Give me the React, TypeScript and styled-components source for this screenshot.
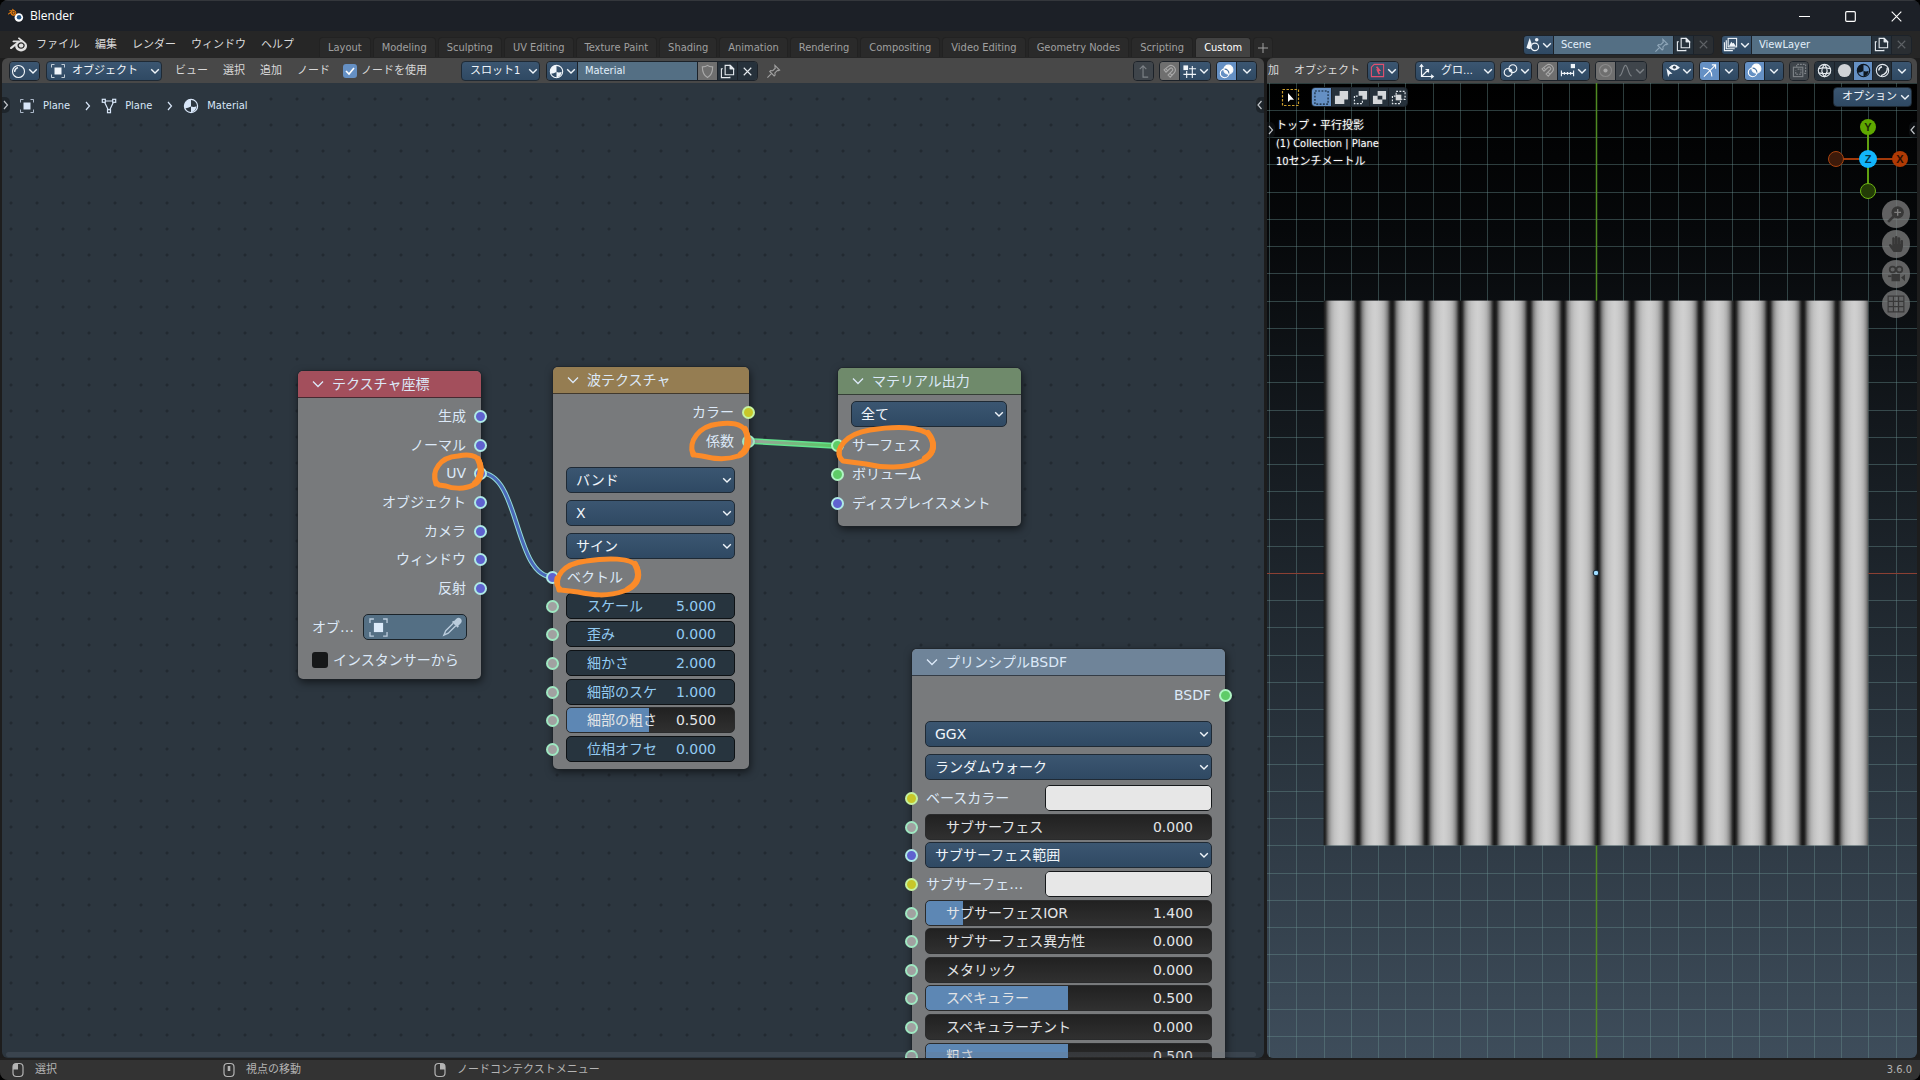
import React, { useId } from "react";
import styled, { createGlobalStyle, css } from "styled-components";
import { SiBlender } from "react-icons/si";
import { FaHandPaper } from "react-icons/fa";

const uiFont = `"DejaVu Sans Condensed", "DejaVu Sans", "Noto Sans CJK JP", sans-serif`;
const nodeFont = `"DejaVu Sans", "Noto Sans CJK JP", sans-serif`;

const GlobalStyle = createGlobalStyle`
  * { box-sizing: border-box; }
  body { margin: 0; background: #000; overflow: hidden; }
  button, input, select { font: inherit; color: inherit; margin: 0; padding: 0; border: 0; background: none; border-radius: 0; outline: none; }
  svg { display: block; flex: none; }
`;

/* ---------- icons ---------- */

const Svg = ({ s = 16, children, sw = 1.2 }: { s?: number; sw?: number; children: React.ReactNode }) => (
  <svg width={s} height={s} viewBox="0 0 16 16" fill="none" stroke="currentColor" strokeWidth={sw} aria-hidden="true">
    {children}
  </svg>
);

const Chevron = ({ s = 10 }: { s?: number }) => (
  <svg width={s} height={s} viewBox="0 0 10 10" fill="none" stroke="currentColor" strokeWidth="1.4" aria-hidden="true">
    <path d="M1.2 3.2 5 7 8.8 3.2" />
  </svg>
);
const Angle = ({ left }: { left?: boolean }) => (
  <svg width="6" height="10" viewBox="0 0 6 10" fill="none" stroke="currentColor" strokeWidth="1.2" aria-hidden="true">
    <path d={left ? "M4.5 1 1 5l3.5 4" : "M1 1l3.5 4L1 9"} />
  </svg>
);

const icons: Record<string, React.ReactNode> = {
  shader: (<><circle cx="8" cy="8" r="6.4" /><path d="M4 8.5A4 4 0 0 1 7.5 4" strokeWidth="1.6" /></>),
  object: (<><rect x="4.5" y="4.5" width="7" height="7" fill="currentColor" stroke="none" /><path d="M1.5 4.5v-3h3M11.5 1.5h3v3M14.5 11.5v3h-3M4.5 14.5h-3v-3" strokeWidth="1" opacity=".75" /></>),
  mesh: (<><path d="M4 3h8M3.6 4.2 7.3 12M12.4 4.2 8.7 12" /><rect x="1.3" y="1.3" width="3" height="3" /><rect x="11.7" y="1.3" width="3" height="3" /><rect x="6.5" y="11.7" width="3" height="3" /></>),
  material: (<><circle cx="8" cy="8" r="6.6" /><path d="M8 1.4A6.6 6.6 0 0 0 2 10.5Q5 10 8 8.500zM8 8.500q3 1 5.500-.2Q13 13 8 14.600z" fill="currentColor" stroke="none" /></>),
  shield: <path d="M8 1.5C6.5 2.8 4.5 3 2.5 3c0 5 .8 9 5.5 11.5C12.7 12 13.500 8 13.500 3c-2 0-4-.2-5.500-1.500z" />,
  copy: (<><path d="M5.5 1.5h5.5l3.5 3.5v6.5h-9zM11 1.5V5h3.5" /><path d="M11 2v3h3.300z" fill="currentColor" /><path d="M3 5H1.5v9.5h9V13.5" /></>),
  close: <path d="m4 4 8 8M12 4l-8 8" />,
  pin: <path d="m9.5 1.5 5 5-1.2.6-1.1-.3-2.7 2.7.2 2.3-1 .9-4.7-4.700.9-1 2.300.2 2.700-2.700-.3-1.100zM6 10l-4.500 4.500" />,
  parent: <path d="M13 14H7.5V2M4 5.5 7.5 2 11 5.5" />,
  magnet: <path d="M2.2 6.3 6.8 2.5a4.7 4.7 0 0 1 6.4 6.7L8.8 14 6.500 11.800l4.400-4.500a1.700 1.700 0 0 0-2.400-2.500L4.300 8.700zM4 4.800l2 2.400M8.400 9.800l2.300 2.200" />,
  snapGrid: (<><path d="M5 7.5V15M11 2v13M7.5 5H15M1.5 11H15" /><rect x="1.5" y="1.5" width="5" height="5" fill="currentColor" stroke="none" /></>),
  snapInc: (<><path d="M1.5 8v6M14.5 8v6M1.5 11h13M4.7 9.5v3M8 9.5v3M11.3 9.5v3" /><rect x="11.5" y="1" width="4.5" height="4.5" fill="currentColor" stroke="none" /></>),
  overlays: (<><circle cx="10" cy="6" r="4.8" fill="currentColor" /><circle cx="6" cy="10" r="4.6" /><path d="M6 5.4a4.6 4.6 0 0 1 4.6 4.6" stroke="#4b74a3" /></>),
  scene: (<><path d="M5 1 1.5 11.5q3 2 4.5 1L7 7z" fill="currentColor" stroke="none" /><circle cx="10.5" cy="10.5" r="4" /><circle cx="12.5" cy="3" r="1.9" fill="currentColor" stroke="none" /></>),
  layers: (<><rect x="5.5" y="1.5" width="9" height="9" /><path d="m6.5 9.5 2.3-4.5 1.5 2 1-1 2.2 3.500z" fill="currentColor" stroke="none" /><path d="M3.5 3.5v9h9M1.5 5.5v9h9" /></>),
  filter: (<g stroke="#e0506e"><path d="M4.5 1.5h10v13h-13v-10z" /><path d="M7 4l3 3.500H8l2 4.500" strokeWidth="1.8" /></g>),
  axes: (<path d="M2.5 2v11.5H14M2.5 13.5 9 7M.7 4 2.5 1.7 4.3 4M12 11.7l2.3 1.8-2.3 1.8M6.5 6.5H9.5V9.5" />),
  pivot: (<><circle cx="5.5" cy="10" r="4.2" /><circle cx="10.5" cy="6" r="4.2" /><circle cx="8" cy="8" r="1.5" fill="currentColor" stroke="none" /></>),
  proportional: (<><circle cx="8" cy="8" r="6.4" opacity=".45" /><circle cx="8" cy="8" r="2.2" fill="currentColor" stroke="none" /></>),
  falloff: <path d="M1.5 14C5 13 5.500 2.500 8 2.500S11 13 14.500 14" />,
  visibility: (<><path d="M5 5Q9.5-.5 15 5q-5 4.500-10 0z" fill="currentColor" /><circle cx="10" cy="4.5" r="1.7" fill="#345" stroke="none" /><path d="m1.5 5.5 6.500 6-3 .3L3.300 15z" fill="currentColor" stroke="none" /></>),
  gizmo: (<><path d="M2 5.500Q10.500 5.500 10.500 14.500M2 14.500 14 2.500M10.500 2H14.500V6" strokeWidth="1.1" /><circle cx="2" cy="5.500" r="1" fill="currentColor" stroke="none" /></>),
  xray: (<><rect x="1.5" y="4.5" width="10" height="10" /><path d="M5 4V1.5h9.5V11H12M6 6.500h3.500V12H4V8" strokeDasharray="2 1" /></>),
  wire: (<><circle cx="8" cy="8" r="6.6" /><path d="M1.6 6Q8 4.5 14.4 6M1.6 10.500q6.400 1.500 12.800 0M8 1.400Q2.500 8 8 14.600 13.500 8 8 1.400" /></>),
  solid: <circle cx="8" cy="8" r="7" fill="#cfd2d6" stroke="none" />,
  rendered: (<><circle cx="8" cy="8" r="6.6" /><path d="M4 8A4.5 4.5 0 0 1 7.5 4M13 5q1 6-6.500 8.500" strokeWidth="1.5" /></>),
  mouseL: (<><rect x="3" y="1.5" width="10" height="13" rx="3.5" /><path d="M3 7.5V4.5a3 3 0 0 1 3-3h2v6z" fill="currentColor" stroke="none" /></>),
  mouseM: (<><rect x="3" y="1.5" width="10" height="13" rx="3.5" /><rect x="6.7" y="4" width="2.6" height="5" fill="currentColor" stroke="none" /></>),
  mouseR: (<><rect x="3" y="1.5" width="10" height="13" rx="3.5" /><path d="M13 7.5V4.5a3 3 0 0 0-3-3H8v6z" fill="currentColor" stroke="none" /></>),
  dropper: (<g opacity=".75"><path d="M10 4 12.500 6.500l2-2a1.700 1.700 0 0 0-2.500-2.500zM8.500 3.500l4.500 4.500" fill="currentColor" strokeWidth="1.5" /><path d="m9 5-6 6-1.500 3.500L5 13l6-6" strokeWidth="1.100" /></g>),
};
const Icon = ({ n, s }: { n: string; s?: number }) => <Svg s={s}>{icons[n]}</Svg>;

const BlenderLogo = () => (
  <svg width="17" height="17" viewBox="0 0 24 24" aria-hidden="true">
    <circle cx="15.3" cy="13.5" r="6" fill="#fff" />
    <SiBlender x="0" y="0" width="24" height="24" color="#e87d0d" />
    <circle cx="15.6" cy="13.2" r="3.2" fill="#265787" />
  </svg>
);

/* ---------- window frame ---------- */

const Window = styled.div`
  height: 100vh;
  display: grid;
  grid-template-rows: 31px 27px minmax(0, 1fr) 22px;
  background: #1d1d1d;
  border-radius: 8px;
  overflow: hidden;
  font: 11px/16px ${uiFont};
  color: #d6d6d6;
  cursor: default;
  white-space: nowrap;
`;
const TitleBar = styled.header`
  display: flex;
  align-items: center;
  gap: 5px;
  padding: 0 1px 0 8px;
  background: #1c2027;
  border-top: 1px solid #34373c;
  color: #fff;
  font: 12px/16px "Open Sans", "Noto Sans", sans-serif;
`;
const WindowButtons = styled.div`
  display: flex;
  margin-left: auto;
  height: 100%;
`;
const WindowButton = styled.button`
  width: 46px;
  display: grid;
  place-items: center;
`;
const MenuBar = styled.div`
  display: flex;
  align-items: center;
  padding: 0 8px 0 10px;
  background: #262626;
`;
const Menus = styled.nav`
  display: flex;
  gap: 15px;
`;
const MenuButton = styled.button`
  height: 19px;
  color: #dadada;
`;
const AppButton = styled.button`
  margin-right: 9px;
  color: #e0e0e0;
`;
const Tabs = styled.div`
  display: flex;
  align-self: flex-end;
  gap: 2px;
  margin: 0 0 1px 25px;
`;
const Tab = styled.button<{ $active?: boolean }>`
  height: 20px;
  padding: 0 8px;
  border-radius: 4px 4px 0 0;
  border: 1px solid #222;
  border-bottom: 0;
  background: ${(p) => (p.$active ? "#424242" : "#2a2a2a")};
  color: ${(p) => (p.$active ? "#fff" : "#a0a0a0")};
`;
const AddTab = styled(Tab)`
  padding: 0 4px;
`;
const Blocks = styled.div`
  display: flex;
  gap: 7px;
  margin-left: auto;
`;
const Areas = styled.main`
  display: flex;
  gap: 3px;
  padding: 0 3px 0 2px;
  min-height: 0;
`;
const Area = styled.section<{ $grow: number }>`
  flex: ${(p) => p.$grow} 1 0;
  min-width: 0;
  display: flex;
  flex-direction: column;
  border-radius: 6px;
  overflow: hidden;
`;
const AreaHeader = styled.div<{ $pad: string }>`
  height: 25px;
  flex: none;
  display: flex;
  align-items: center;
  padding: ${(p) => p.$pad};
  background: #484848;
`;
const HeaderGroup = styled.div<{ $gap?: number; $ml?: string }>`
  display: flex;
  align-items: center;
  gap: ${(p) => p.$gap ?? 6}px;
  margin-left: ${(p) => p.$ml ?? "0"};
`;
const StatusBar = styled.footer`
  display: flex;
  align-items: center;
  padding: 0 8px 0 10px;
  background: #333;
  border-top: 2px solid #1f1f1f;
  color: #b4b4b4;
`;
const Hint = styled.span`
  width: 211px;
  display: flex;
  gap: 9px;
`;
const Version = styled.span`
  margin-left: auto;
`;

/* ---------- header widgets ---------- */

const blue = "linear-gradient(#3b5671, #2f4963)";

const Joined = styled.div`
  display: flex;
  height: 20px;
  border: 1px solid #1c2229;
  border-radius: 4px;
  overflow: hidden;
  & > * + * { border-left: 1px solid #1c2229; }
`;
type Tone = "menu" | "on" | "grey" | "dark" | "off" | "dim";
const tones: Record<Tone, ReturnType<typeof css>> = {
  menu: css`background: ${blue}; color: #f0f5fa;`,
  on: css`background: #6590c4; color: #fff;`,
  grey: css`background: #6f6f6f; color: #a8a8a8;`,
  dark: css`background: #26313b; color: #e4e9ee;`,
  off: css`background: #2a2e32; color: #5d6165;`,
  dim: css`background: #3f454b; color: #7d8287;`,
};
const Cell = styled.button<{ $tone: Tone; $w: number }>`
  width: ${(p) => p.$w}px;
  display: flex;
  align-items: center;
  justify-content: center;
  gap: 2px;
  ${(p) => tones[p.$tone]}
`;
const NameInput = styled.input<{ $w: number }>`
  width: ${(p) => p.$w}px;
  padding: 0 7px;
  background: #546f84;
  color: #e3effb;
`;
const Pinned = styled.div`
  position: relative;
  display: flex;
  & > svg { position: absolute; right: 4px; top: 2px; color: #8fa6b8; }
`;
const SelectWrap = styled.div<{ $w?: number; $node?: boolean }>`
  position: relative;
  width: ${(p) => (p.$w ? p.$w + "px" : "100%")};
  color: #f0f5fa;
  & > svg { position: absolute; top: 50%; transform: translateY(-50%); pointer-events: none; }
  & > svg:first-of-type:not(:last-child) { left: 4px; }
  & > svg:last-child { right: ${(p) => (p.$node ? 3 : 2)}px; }
`;
const Select = styled.select<{ $pl: number; $h: number }>`
  appearance: none;
  display: block;
  width: 100%;
  height: ${(p) => p.$h}px;
  padding: 0 14px 0 ${(p) => p.$pl}px;
  border: 1px solid #1f2a35;
  border-radius: ${(p) => (p.$h > 20 ? 5 : 4)}px;
  background: ${blue};
`;
const CheckLabel = styled.label<{ $node?: boolean }>`
  display: flex;
  align-items: center;
  gap: ${(p) => (p.$node ? 5 : 4)}px;
`;
const Check = styled.input<{ $s: number }>`
  appearance: none;
  width: ${(p) => p.$s}px;
  height: ${(p) => p.$s}px;
  border-radius: 3px;
  background: #161819;
  &:checked {
    background: #6590c4 url("data:image/svg+xml,%3Csvg xmlns='http://www.w3.org/2000/svg' viewBox='0 0 14 14'%3E%3Cpath d='M3 7l3 3 5-6' fill='none' stroke='white' stroke-width='1.6'/%3E%3C/svg%3E");
  }
`;
const PlainIcon = styled.button`
  color: #a0a0a0;
`;

const IconSelect = ({ icon, label, w }: { icon?: string; label: string; w: number }) => (
  <SelectWrap $w={w}>
    <Select $pl={icon ? 25 : 8} $h={20} aria-label={label}><option>{label}</option></Select>
    {icon && <Icon n={icon} />}
    <Chevron />
  </SelectWrap>
);
const MenuCell = ({ icon, w = 31, tone = "menu" as Tone, label }: { icon?: string; w?: number; tone?: Tone; label: string }) => (
  <Cell $tone={tone} $w={w} aria-label={label}>
    {icon && <Icon n={icon} s={15} />}
    <Chevron />
  </Cell>
);
const IconCell = ({ icon, tone, label, w = 19 }: { icon: string; tone: Tone; label: string; w?: number }) => (
  <Cell $tone={tone} $w={w} aria-label={label}><Icon n={icon} s={15} /></Cell>
);

/* ---------- node editor ---------- */

const Canvas = styled.div`
  position: relative;
  flex: 1;
  min-height: 0;
  overflow: hidden;
  background: radial-gradient(circle, #222a31 1px, transparent 2px) -4px 3px / 26px 26px #2c363f;
  font: 14px/20px ${nodeFont};
`;
const Breadcrumbs = styled.nav`
  display: flex;
  align-items: center;
  width: 264px;
  height: 34px;
  margin-top: 6px;
  padding-left: 17px;
  gap: 8px;
  background: #2c363f;
  color: #d8e6f8;
  font: 11px/16px ${uiFont};
  & > svg { margin: 0 2px 0 7px; }
`;
const Crumb = styled.a`
  display: flex;
  gap: 8px;
  color: inherit;
  text-decoration: none;
`;
const EdgeToggle = styled.button<{ $side: "left" | "right"; $top: number }>`
  position: absolute;
  ${(p) => p.$side}: 0;
  top: ${(p) => p.$top}px;
  width: 8px;
  height: 16px;
  display: grid;
  place-items: center;
  border-radius: ${(p) => (p.$side === "left" ? "0 5px 5px 0" : "5px 0 0 5px")};
  background: rgba(20, 24, 28, 0.55);
  color: #c0c4c8;
`;
const Layer = styled.svg`
  position: absolute;
  inset: 0;
  width: 100%;
  height: 100%;
  pointer-events: none;
`;
const ScrollTrack = styled.div`
  position: absolute;
  left: 4px;
  right: 8px;
  bottom: 1px;
  height: 5px;
  border-radius: 3px;
  background: rgba(110, 120, 130, 0.22);
`;
const NodeBox = styled.article<{ $x: number; $y: number; $w: number }>`
  position: absolute;
  left: ${(p) => p.$x}px;
  top: ${(p) => p.$y}px;
  width: ${(p) => p.$w}px;
  border-radius: 5px;
  background: #787a7c;
  box-shadow: 0 0 0 1px rgba(30, 35, 40, 0.55), 1px 3px 9px rgba(0, 0, 0, 0.6);
  color: #dce9f8;
`;
const NodeHeader = styled.h2<{ $color: string }>`
  display: flex;
  align-items: center;
  gap: 8px;
  height: 27px;
  margin: 0;
  padding: 0 0 0 14px;
  border-radius: 5px 5px 0 0;
  border-bottom: 1px solid rgba(20, 22, 26, 0.65);
  background: ${(p) => p.$color};
  font: inherit;
`;
const NodeBody = styled.div<{ $pad: string }>`
  padding: ${(p) => p.$pad};
`;
/* sockets sit on a shared pitch, so a group's height depends only on its row count */
const SocketGroup = styled.div<{ $rows: number }>`
  display: grid;
  grid-auto-rows: 1fr;
  height: ${(p) => Math.round(p.$rows * 28.6)}px;
`;
const SocketRow = styled.div<{ $out?: boolean }>`
  position: relative;
  display: flex;
  align-items: center;
  justify-content: ${(p) => (p.$out ? "flex-end" : "space-between")};
  padding: ${(p) => (p.$out ? "0 1px 0 0" : "0 0 0 1px")};
`;
const FieldRow = styled(SocketRow)`
  padding: 0;
`;
const kinds = {
  vector: ["#5f62cf", "#aee9e6"],
  color: ["#c7c729", "#c5f2a0"],
  float: ["#a1a1a1", "#9fe8c2"],
  shader: ["#5fcc67", "#b0f5c4"],
} as const;
type Kind = keyof typeof kinds;
const Socket = styled.i<{ $kind: Kind; $out?: boolean }>`
  position: absolute;
  top: 50%;
  ${(p) => (p.$out ? "right" : "left")}: -20px;
  width: 13px;
  height: 13px;
  margin-top: -6px;
  border-radius: 50%;
  border: 2px solid ${(p) => kinds[p.$kind][1]};
  background: ${(p) => kinds[p.$kind][0]};
`;
const SelectStack = styled.div`
  display: grid;
  gap: 7px;
  margin: 12px 0 4px;
`;
const Num = styled.label<{ $fill?: number; $linked?: boolean }>`
  display: flex;
  align-items: center;
  justify-content: space-between;
  width: 100%;
  height: 26px;
  padding: 0 18px 0 20px;
  border-radius: 5px;
  border: 1px solid ${(p) => (p.$linked ? "#0e1215" : "#2a2b2c")};
  color: ${(p) => (p.$linked ? "#93cbf2" : "#e2e4e6")};
  background: ${(p) =>
    p.$linked
      ? "#27343e"
      : `linear-gradient(to right, #5d87b4 ${p.$fill ?? 0}%, transparent ${p.$fill ?? 0}%), linear-gradient(#212121, #303030)`};
`;
const NumName = styled.span<{ $clip?: boolean }>`
  overflow: hidden;
  ${(p) => p.$clip && css`width: 70px;`}
`;
const NumInput = styled.input`
  width: 48px;
  text-align: right;
`;
const Swatch = styled.input`
  appearance: none;
  width: 167px;
  height: 26px;
  border: 1px solid #15181a;
  border-radius: 5px;
  overflow: hidden;
  &::-webkit-color-swatch-wrapper { padding: 0; }
  &::-webkit-color-swatch { border: 0; }
`;
const ObjectRow = styled.div`
  display: flex;
  align-items: center;
  justify-content: space-between;
  margin: 12px 0 10px;
`;
const ObjectPicker = styled.button`
  display: flex;
  align-items: center;
  justify-content: space-between;
  width: 104px;
  height: 26px;
  padding: 0 4px;
  border: 1px solid #1b2329;
  border-radius: 5px;
  background: #546f84;
  color: #dcebfa;
`;

const NodeSelect = ({ label }: { label: string }) => (
  <SelectWrap $node>
    <Select $pl={9} $h={26} aria-label={label}><option>{label}</option></Select>
    <Chevron />
  </SelectWrap>
);
const Out = ({ name, kind }: { name: string; kind: Kind }) => (
  <SocketRow $out>{name}<Socket $kind={kind} $out /></SocketRow>
);
const In = ({ name, kind }: { name: string; kind: Kind }) => (
  <SocketRow><Socket $kind={kind} />{name}</SocketRow>
);
const NumRow = ({ name, value, fill, linked }: { name: string; value: string; fill?: number; linked?: boolean }) => {
  const id = useId();
  return (
    <FieldRow>
      <Socket $kind="float" />
      <Num htmlFor={id} $fill={fill} $linked={linked}>
        <NumName $clip={linked || name === "細部の粗さ"}>{name}</NumName>
        <NumInput id={id} defaultValue={value} />
      </Num>
    </FieldRow>
  );
};
const ColorRow = ({ name }: { name: string }) => {
  const id = useId();
  return (
    <SocketRow>
      <Socket $kind="color" />
      <label htmlFor={id}>{name}</label>
      <Swatch id={id} type="color" defaultValue="#e7e7e7" />
    </SocketRow>
  );
};
const Node = (p: { x: number; y: number; w: number; color: string; title: string; pad: string; children: React.ReactNode }) => (
  <NodeBox $x={p.x} $y={p.y} $w={p.w}>
    <NodeHeader $color={p.color}>
      <svg width="12" height="12" viewBox="0 0 12 12" fill="none" stroke="currentColor" strokeWidth="1.3" aria-hidden="true"><path d="m1 3.5 5 5 5-5" /></svg>
      {p.title}
    </NodeHeader>
    <NodeBody $pad={p.pad}>{p.children}</NodeBody>
  </NodeBox>
);

const NodeEditor = () => (
  <Canvas>
    <Breadcrumbs aria-label="context path">
      <Crumb href="#object"><Icon n="object" />Plane</Crumb>
      <Angle />
      <Crumb href="#mesh"><Icon n="mesh" />Plane</Crumb>
      <Angle />
      <Crumb href="#material"><Icon n="material" />Material</Crumb>
    </Breadcrumbs>
    <EdgeToggle $side="left" $top={14} aria-label="toolbar"><Angle /></EdgeToggle>
    <EdgeToggle $side="right" $top={14} aria-label="sidebar"><Angle left /></EdgeToggle>

    <Layer fill="none">
      <defs>
        <linearGradient id="linkFade" gradientUnits="userSpaceOnUse" x1="747" y1="0" x2="836" y2="0">
          <stop offset="0" stopColor="#a1a1a1" />
          <stop offset="1" stopColor="#55c860" />
        </linearGradient>
      </defs>
      <path d="M479 390C518 390 512 494 551 494" stroke="#93dcd8" strokeWidth="5" />
      <path d="M479 390C518 390 512 494 551 494" stroke="#4a68b8" strokeWidth="3" />
      <path d="M747 358 836 363" stroke="#62e48d" strokeWidth="6" />
      <path d="M747 358 836 363" stroke="url(#linkFade)" strokeWidth="3" />
    </Layer>

    <Node x={296} y={288} w={183} color="#a34f5c" title="テクスチャ座標" pad="4px 14px 9px">
      <SocketGroup $rows={7}>
        {["生成", "ノーマル", "UV", "オブジェクト", "カメラ", "ウィンドウ", "反射"].map((n) => (
          <Out key={n} name={n} kind="vector" />
        ))}
      </SocketGroup>
      <ObjectRow>
        <span>オブ…</span>
        <ObjectPicker aria-label="object"><Icon n="object" s={21} /><Icon n="dropper" s={20} /></ObjectPicker>
      </ObjectRow>
      <CheckLabel $node><Check $s={16} type="checkbox" />インスタンサーから</CheckLabel>
    </Node>

    <Node x={551} y={284} w={196} color="#957d52" title="波テクスチャ" pad="4px 14px 6px 13px">
      <SocketGroup $rows={2}>
        <Out name="カラー" kind="color" />
        <Out name="係数" kind="float" />
      </SocketGroup>
      <SelectStack>
        <NodeSelect label="バンド" />
        <NodeSelect label="X" />
        <NodeSelect label="サイン" />
      </SelectStack>
      <SocketGroup $rows={7}>
        <In name="ベクトル" kind="vector" />
        <NumRow linked name="スケール" value="5.000" />
        <NumRow linked name="歪み" value="0.000" />
        <NumRow linked name="細かさ" value="2.000" />
        <NumRow linked name="細部のスケ" value="1.000" />
        <NumRow name="細部の粗さ" value="0.500" fill={49} />
        <NumRow linked name="位相オフセ" value="0.000" />
      </SocketGroup>
    </Node>

    <Node x={836} y={285} w={183} color="#6f8a6b" title="マテリアル出力" pad="6px 14px 9px 13px">
      <NodeSelect label="全て" />
      <NodeBody $pad="4px 0 0">
        <SocketGroup $rows={3}>
          <In name="サーフェス" kind="shader" />
          <In name="ボリューム" kind="shader" />
          <In name="ディスプレイスメント" kind="vector" />
        </SocketGroup>
      </NodeBody>
    </Node>

    <Node x={910} y={566} w={313} color="#6f8499" title="プリンシプルBSDF" pad="4px 13px 12px">
      <SocketGroup $rows={1}><Out name="BSDF" kind="shader" /></SocketGroup>
      <SelectStack>
        <NodeSelect label="GGX" />
        <NodeSelect label="ランダムウォーク" />
      </SelectStack>
      <SocketGroup $rows={10}>
        <ColorRow name="ベースカラー" />
        <NumRow name="サブサーフェス" value="0.000" />
        <FieldRow><Socket $kind="vector" /><NodeSelect label="サブサーフェス範囲" /></FieldRow>
        <ColorRow name="サブサーフェ…" />
        <NumRow name="サブサーフェスIOR" value="1.400" fill={13} />
        <NumRow name="サブサーフェス異方性" value="0.000" />
        <NumRow name="メタリック" value="0.000" />
        <NumRow name="スペキュラー" value="0.500" fill={50} />
        <NumRow name="スペキュラーチント" value="0.000" />
        <NumRow name="粗さ" value="0.500" fill={50} />
      </SocketGroup>
    </Node>

    {/* hand-drawn annotation strokes */}
    <Layer fill="none" stroke="#fb8b29" strokeWidth="5" strokeLinecap="round" strokeLinejoin="round">
      <path d="M434 401C429 388 438 374 456 373C466 371 476 372 478 380C481 389 479 399 471 402C462 407 449 405 444 403L437 402Q432 399 433 391" />
      <path d="M691 372C686 358 697 343 716 341C730 339 742 341 745 351C749 363 744 371 736 373C722 378 708 375 700 373L693 372Q689 368 690 362" />
      <path d="M839 376C833 366 843 351 868 347C893 343 920 343 928 353C935 364 931 373 920 378C903 386 880 385 864 381L841 378Q836 374 837 367" />
      <path d="M557 507C552 494 560 481 584 478C604 475 630 474 635 484C640 496 634 504 622 508C605 514 590 512 576 509L559 507Q553 502 555 495" />
      <path d="M476 376C481 386 478 396 473 400M743 346C748 356 745 367 739 371M926 350C934 360 932 370 923 375M633 481C639 492 635 501 626 506" strokeWidth="6" />
    </Layer>
    <ScrollTrack />
  </Canvas>
);

/* ---------- 3D viewport ---------- */

const Viewport = styled.div`
  position: relative;
  flex: 1;
  min-height: 0;
  overflow: hidden;
  background: linear-gradient(#000, #06080a 15%, #3e4d5b);
`;
const ToolRow = styled.div`
  position: relative;
  display: flex;
  align-items: center;
  gap: 11px;
  padding: 4px 5px 0 14px;
  & > :last-child { margin-left: auto; }
`;
const ToolButton = styled.button`
  color: #fff;
`;
const Info = styled.div`
  position: relative;
  margin: 10px 0 0 9px;
  color: #fff;
  line-height: 18px;
  text-shadow: 0 0 2px rgba(255, 255, 255, 0.4);
`;
const GizmoSvg = styled.svg`
  position: absolute;
  right: 8px;
  top: 34px;
  font: 700 11px/1 "Liberation Sans", sans-serif;
`;
const NavColumn = styled.div`
  position: absolute;
  right: 7px;
  top: 117px;
  display: grid;
  gap: 2px;
`;
const NavButton = styled.button`
  width: 28px;
  height: 28px;
  display: grid;
  place-items: center;
  border-radius: 50%;
  background: rgba(128, 128, 128, 0.75);
  color: #383838;
`;

const STEP = 27.24;
const CX = 329;
const CY = 490;
const HALF = STEP * 10;
const WAVE = 34.24;
const waveStops: [number, string][] = [
  [0, "#161616"], [0.05, "#282828"], [0.09, "#4e4e4e"], [0.13, "#777777"], [0.18, "#979797"], [0.24, "#b1b1b1"],
  [0.32, "#c2c2c2"], [0.42, "#cccccc"], [0.5, "#d0d0d0"],
];
const stops = [...waveStops, ...waveStops.slice(0, -1).reverse().map(([o, c]) => [1 - o, c] as [number, string])];
const steps = Array.from({ length: 41 }, (_, i) => i - 20).filter((i) => i !== 0);

const Scene3D = () => (
  <Layer viewBox="0 0 650 975" preserveAspectRatio="xMidYMid slice">
    <defs>
      <linearGradient id="wave" gradientUnits="userSpaceOnUse" spreadMethod="repeat" x1={CX - HALF} x2={CX - HALF + WAVE} y1="0" y2="0">
        {stops.map(([o, c], i) => <stop key={i} offset={o} stopColor={c} />)}
      </linearGradient>
    </defs>
    <g stroke="#6a9090" strokeOpacity=".42">
      {steps.map((i) => (
        <React.Fragment key={i}>
          <path d={`M${Math.round(CX + i * STEP) + 0.5} 0V975`} />
          <path d={`M0 ${Math.round(CY + i * STEP) + 0.5}H650`} />
        </React.Fragment>
      ))}
    </g>
    <path d={`M0 ${CY + 0.5}H650`} stroke="#8c4033" />
    <path d={`M${CX + 0.5} 0V975`} stroke="#4f8a22" strokeWidth="1.5" />
    <rect x={CX - HALF} y={CY - HALF} width={HALF * 2} height={HALF * 2} fill="url(#wave)" />
    <circle cx={CX} cy={CY} r="2.8" fill="#9fdcff" stroke="#12222e" />
  </Layer>
);

const Gizmo = () => (
  <GizmoSvg width="82" height="84" viewBox="0 0 82 84" textAnchor="middle">
    <path d="M9 42H73" stroke="#a33a0a" strokeWidth="2" />
    <path d="M41 10V74" stroke="#5fa010" strokeWidth="2" />
    <circle cx="9" cy="42" r="7.5" fill="#3d1a0a" stroke="#a84410" />
    <circle cx="41" cy="74" r="7.5" fill="#233c06" stroke="#6db512" />
    <circle cx="41" cy="10" r="8" fill="#5fa800" />
    <circle cx="73" cy="42" r="8" fill="#b03a04" />
    <circle cx="41" cy="42" r="9" fill="#12b5fb" />
    <text x="41" y="14" fill="#1a2c04">Y</text>
    <text x="73" y="46" fill="#2c0e02">X</text>
    <text x="41" y="46" fill="#04344a">Z</text>
  </GizmoSvg>
);

const SelectMode = ({ d, on }: { d: React.ReactNode; on?: boolean }) => (
  <Cell $tone={on ? "on" : "dark"} $w={19} aria-label="select mode">
    <Svg s={15}>{d}</Svg>
  </Cell>
);
const dash = { strokeDasharray: "2 1.5" };

const ViewportArea = () => (
  <Viewport>
    <Scene3D />
    <ToolRow>
      <ToolButton aria-label="select box">
        <svg width="19" height="19" viewBox="0 0 19 19" fill="none" aria-hidden="true">
          <rect x="1.5" y="1.5" width="16" height="16" stroke="#c79a2a" strokeWidth="1.2" strokeDasharray="2.5 1.5" />
          <path d="M7 5v9l2.300-2.200H13z" fill="#fff" />
        </svg>
      </ToolButton>
      <Joined>
        <SelectMode on d={<rect x="1" y="1" width="14" height="14" stroke="#102030" {...dash} />} />
        <SelectMode d={<path d="M6 1h9v9h-4v5H1V6h5z" fill="#d4d7da" stroke="none" />} />
        <SelectMode d={<><path d="M6 1h9v9h-5V6H6z" fill="#d4d7da" stroke="none" /><path d="M5 6.5H1.5v8H10V11" {...dash} /></>} />
        <SelectMode d={<path d="M6 1h9v9h-4v5H1V6h5zM6 6v4h5V6z" fillRule="evenodd" fill="#d4d7da" stroke="none" />} />
        <SelectMode d={<><path d="M5.5 5V1.5H15V10h-4M5 6.5H1.5v8H10V11" {...dash} /><rect x="5" y="5" width="6" height="6" fill="#d4d7da" stroke="none" /></>} />
      </Joined>
      <IconSelect label="オプション" w={79} />
    </ToolRow>
    <Info>
      <div>トップ・平行投影</div>
      <div>(1) Collection | Plane</div>
      <div>10センチメートル</div>
    </Info>
    <EdgeToggle $side="left" $top={39} aria-label="toolbar"><Angle /></EdgeToggle>
    <EdgeToggle $side="right" $top={39} aria-label="sidebar"><Angle left /></EdgeToggle>
    <Gizmo />
    <NavColumn>
      <NavButton aria-label="zoom">
        <Svg s={18}><circle cx="9.5" cy="6.5" r="5.5" fill="currentColor" stroke="none" /><path d="m6 10-5 5" strokeWidth="2.2" /><path d="M9.5 3.5v6M6.5 6.5h6" stroke="#808080" /></Svg>
      </NavButton>
      <NavButton aria-label="pan"><FaHandPaper size={16} /></NavButton>
      <NavButton aria-label="camera">
        <Svg s={18} sw={1.5}><circle cx="5" cy="4" r="2.6" /><circle cx="11" cy="4" r="2.6" /><path d="M4 8h7.500v6.500H4zM12.500 11 16 8.500v6z" fill="currentColor" stroke="none" /><path d="M1 10h3" /></Svg>
      </NavButton>
      <NavButton aria-label="perspective">
        <Svg s={18} sw={1}><path d="M1 1h14v14H1zM5.7 1v14M10.3 1v14M1 5.7h14M1 10.3h14" /></Svg>
      </NavButton>
    </NavColumn>
  </Viewport>
);

/* ---------- page ---------- */

const tabs = ["Layout", "Modeling", "Sculpting", "UV Editing", "Texture Paint", "Shading", "Animation", "Rendering", "Compositing", "Video Editing", "Geometry Nodes", "Scripting", "Custom"];

export default function App() {
  return (
    <Window>
      <GlobalStyle />
      <TitleBar>
        <BlenderLogo />
        Blender
        <WindowButtons>
          <WindowButton aria-label="minimize"><Svg s={11}><path d="M0 8h16" strokeWidth="1.6" /></Svg></WindowButton>
          <WindowButton aria-label="maximize"><Svg s={11}><rect x="1" y="1" width="14" height="14" rx="1.5" strokeWidth="1.7" /></Svg></WindowButton>
          <WindowButton aria-label="close"><Svg s={11}><path d="m1 1 14 14M15 1 1 15" strokeWidth="1.6" /></Svg></WindowButton>
        </WindowButtons>
      </TitleBar>

      <MenuBar>
        <AppButton aria-label="Blender"><SiBlender size={17} /></AppButton>
        <Menus>
          {["ファイル", "編集", "レンダー", "ウィンドウ", "ヘルプ"].map((m) => <MenuButton key={m}>{m}</MenuButton>)}
        </Menus>
        <Tabs>
          {tabs.map((t) => <Tab key={t} $active={t === "Custom"}>{t}</Tab>)}
          <AddTab aria-label="add workspace"><Svg s={10}><path d="M8 0v16M0 8h16" strokeWidth="1.6" /></Svg></AddTab>
        </Tabs>
        <Blocks>
          <Joined>
            <MenuCell icon="scene" w={29} label="scene" />
            <Pinned><NameInput $w={119} defaultValue="Scene" aria-label="scene name" /><Icon n="pin" s={15} /></Pinned>
            <IconCell icon="copy" tone="dark" w={20} label="new scene" />
            <IconCell icon="close" tone="off" w={20} label="delete scene" />
          </Joined>
          <Joined>
            <MenuCell icon="layers" w={29} label="view layer" />
            <NameInput $w={120} defaultValue="ViewLayer" aria-label="view layer name" />
            <IconCell icon="copy" tone="dark" w={20} label="new view layer" />
            <IconCell icon="close" tone="off" w={20} label="delete view layer" />
          </Joined>
        </Blocks>
      </MenuBar>

      <Areas>
        <Area $grow={1262}>
          <AreaHeader $pad="1px 7px 0">
            <Joined><MenuCell icon="shader" w={29} label="editor type" /></Joined>
            <HeaderGroup $ml="6px"><IconSelect icon="object" label="オブジェクト" w={116} /></HeaderGroup>
            <HeaderGroup $gap={15} $ml="13px">
              {["ビュー", "選択", "追加", "ノード"].map((m) => <MenuButton key={m}>{m}</MenuButton>)}
            </HeaderGroup>
            <HeaderGroup $ml="13px">
              <CheckLabel><Check $s={14} type="checkbox" defaultChecked />ノードを使用</CheckLabel>
            </HeaderGroup>
            <HeaderGroup $ml="34px">
              <IconSelect label="スロット1" w={79} />
              <Joined>
                <MenuCell icon="material" w={30} label="material" />
                <NameInput $w={120} defaultValue="Material" aria-label="material name" />
                <IconCell icon="shield" tone="grey" w={20} label="fake user" />
                <IconCell icon="copy" tone="dark" w={20} label="new material" />
                <IconCell icon="close" tone="dark" w={20} label="unlink" />
              </Joined>
            </HeaderGroup>
            <HeaderGroup $ml="8px"><PlainIcon aria-label="pin"><Icon n="pin" s={15} /></PlainIcon></HeaderGroup>
            <HeaderGroup $ml="auto" $gap={5}>
              <Joined><IconCell icon="parent" tone="dim" w={19} label="parent" /></Joined>
              <Joined>
                <IconCell icon="magnet" tone="grey" label="snap" />
                <MenuCell icon="snapGrid" w={31} label="snap to" />
              </Joined>
              <Joined>
                <IconCell icon="overlays" tone="on" label="overlays" />
                <MenuCell w={20} label="overlay options" />
              </Joined>
            </HeaderGroup>
          </AreaHeader>
          <NodeEditor />
        </Area>

        <Area $grow={650}>
          <AreaHeader $pad="0 5px 0 1px">
            <HeaderGroup $gap={15}>
              <MenuButton>加</MenuButton>
              <MenuButton>オブジェクト</MenuButton>
            </HeaderGroup>
            <HeaderGroup $ml="7px"><Joined><MenuCell icon="filter" w={30} label="mode" /></Joined></HeaderGroup>
            <HeaderGroup $ml="16px" $gap={5}>
              <IconSelect icon="axes" label="グロ…" w={80} />
              <Joined><MenuCell icon="pivot" w={30} label="pivot" /></Joined>
              <Joined>
                <IconCell icon="magnet" tone="grey" label="snap" />
                <MenuCell icon="snapInc" w={32} label="snap to" />
              </Joined>
              <Joined>
                <IconCell icon="proportional" tone="grey" label="proportional editing" />
                <MenuCell icon="falloff" tone="dim" w={31} label="falloff" />
              </Joined>
            </HeaderGroup>
            <HeaderGroup $ml="auto" $gap={5}>
              <Joined><MenuCell icon="visibility" w={30} label="visibility" /></Joined>
              <Joined>
                <IconCell icon="gizmo" tone="on" label="gizmos" />
                <MenuCell w={19} label="gizmo options" />
              </Joined>
              <Joined>
                <IconCell icon="overlays" tone="on" label="overlays" />
                <MenuCell w={19} label="overlay options" />
              </Joined>
              <Joined><IconCell icon="xray" tone="dim" w={18} label="x-ray" /></Joined>
              <Joined>
                <IconCell icon="wire" tone="dark" label="wireframe" />
                <IconCell icon="solid" tone="dark" label="solid" />
                <Cell $tone="on" $w={19} aria-label="material preview">
                  <Svg s={15}><g stroke="#0d1620" fill="#0d1620"><circle cx="8" cy="8" r="6.6" fill="none" /><path d="M8 1.4A6.6 6.6 0 0 0 2 10.5Q5 10 8 8.500zM8 8.500q3 1 5.500-.2Q13 13 8 14.600z" stroke="none" /></g></Svg>
                </Cell>
                <IconCell icon="rendered" tone="dark" label="rendered" />
                <MenuCell w={20} label="shading options" />
              </Joined>
            </HeaderGroup>
          </AreaHeader>
          <ViewportArea />
        </Area>
      </Areas>

      <StatusBar>
        <Hint><Icon n="mouseL" />選択</Hint>
        <Hint><Icon n="mouseM" />視点の移動</Hint>
        <Hint><Icon n="mouseR" />ノードコンテクストメニュー</Hint>
        <Version>3.6.0</Version>
      </StatusBar>
    </Window>
  );
}
